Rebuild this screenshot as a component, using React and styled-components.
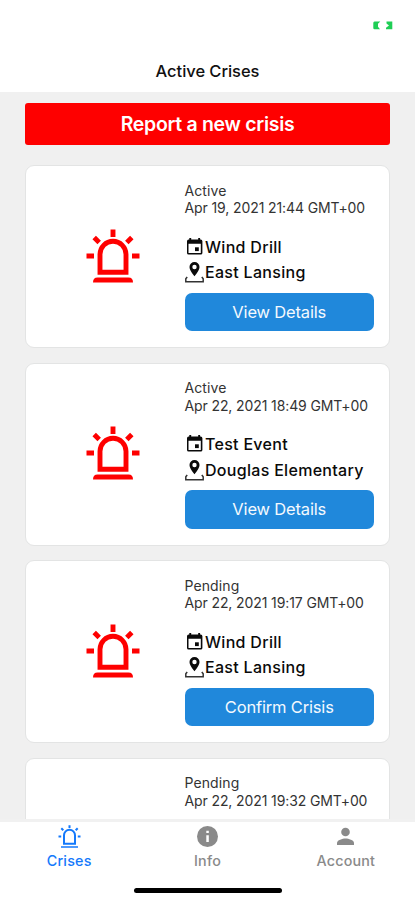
import React from "react";
import styled, { createGlobalStyle } from "styled-components";

const GlobalStyle = createGlobalStyle`
  * { box-sizing: border-box; }
  body { margin: 0; background: #fff; font-family: Inter, "Liberation Sans", sans-serif; }
  button { font-family: inherit; border: 0; padding: 0; margin: 0; }
`;

const Screen = styled.div`
  display: flex;
  flex-direction: column;
  width: 415px;
  height: 900px;
  overflow: hidden;
  background: #fff;
`;

const StatusBar = styled.div`
  display: flex;
  justify-content: flex-end;
  flex: none;
  height: 50px;
  padding: 21px 21px 0 0;
`;

const Header = styled.header`
  display: flex;
  align-items: center;
  justify-content: center;
  flex: none;
  height: 42px;
`;

const HeaderTitle = styled.h1`
  margin: 0;
  font-size: 16.5px;
  line-height: 20px;
  font-weight: 500;
  letter-spacing: -0.05px;
  color: #111;
`;

const Content = styled.main`
  display: flex;
  flex-direction: column;
  flex: none;
  height: 727px;
  padding: 11px 25px 0 25px;
  overflow: hidden;
  background: #f0f0f0;
`;

const ReportButton = styled.button`
  flex: none;
  height: 42px;
  border-radius: 3px;
  background: #fe0000;
  color: #fff;
  font-size: 19.5px;
  line-height: 43px;
  font-weight: 600;
  letter-spacing: -0.3px;
`;

const CardList = styled.div`
  display: flex;
  flex-direction: column;
  gap: 14.5px;
  margin-top: 20px;
`;

const Card = styled.article`
  display: grid;
  grid-template-columns: 158.5px 189.5px;
  flex: none;
  height: 183px;
  border: 1px solid #e3e4e4;
  border-radius: 9px;
  background: #fff;
`;

const CardIcon = styled.div`
  display: flex;
  align-items: center;
  justify-content: center;
  padding: 0 0 2px 15.5px;
`;

const CardBody = styled.div`
  display: flex;
  flex-direction: column;
  padding-top: 15.5px;
`;

const Meta = styled.div`
  height: 17.5px;
  font-size: 14px;
  line-height: 17.5px;
  letter-spacing: ${(p) => p.$tracking || 0}px;
  color: #333;
  white-space: nowrap;
`;

const Facts = styled.div`
  display: flex;
  flex-direction: column;
  margin-top: 17.5px;
`;

const Fact = styled.div`
  display: flex;
  align-items: center;
  height: 25.5px;
  font-size: 16px;
  font-weight: 500;
  letter-spacing: 0.3px;
  color: #0a0a0a;
  white-space: nowrap;
  svg { flex: none; margin-right: 1.5px; }
`;

const ActionButton = styled.button`
  height: 38.5px;
  margin-top: 7.5px;
  border-radius: 7px;
  background: #2088db;
  color: #f4f9fe;
  font-size: 16.5px;
  line-height: 39.5px;
  font-weight: 400;
  letter-spacing: -0.17px;
`;

const TabBarEdge = styled.div`
  flex: none;
  height: 3px;
  background: #f1f1f1;
`;

const TabBar = styled.nav`
  display: grid;
  grid-template-columns: repeat(3, 1fr);
  flex: none;
  height: 54.5px;
`;

const Tab = styled.a`
  display: flex;
  flex-direction: column;
  align-items: center;
  padding-top: 3px;
  color: ${(p) => (p.$active ? "#1479fb" : "#8a8a8a")};
`;

const TabLabel = styled.span`
  margin-top: 4px;
  font-size: 14.3px;
  line-height: 17px;
  font-weight: 500;
  letter-spacing: 0.2px;
`;

const HomeArea = styled.div`
  display: flex;
  justify-content: center;
  padding-top: 11px;
`;

const HomeIndicator = styled.div`
  width: 148px;
  height: 5px;
  border-radius: 3px;
  background: #000;
`;

function BatteryIcon() {
  return (
    <svg width="21" height="9" viewBox="0 0 21 9" fill="#1fce55">
      <path d="M1.500.5h5.800L5 2.800v3l2 2.500H1.500Q.3 8.300.3 7V2Q.3.500 1.500.500Z" />
      <path d="M13.500.5h5.800v7.800h-6.300v-1.500l3-2.300-2.500-2Z" />
    </svg>
  );
}

function SirenIcon() {
  return (
    <svg width="54" height="54" viewBox="0 0 54 54" fill="none" stroke="#fe0000" strokeWidth="4.9">
      <path d="M14 43.300V25.300a13 13 0 0 1 26 0v18Z" />
      <path d="M27 .5V8M.5 27H8M46 27h7.500M8.200 8.500l5 5M45.800 8.500l-5 5" />
      <path fill="#fe0000" stroke="none" d="M7 53.500q0-5 4.500-5h31q4.500 0 4.500 5Z" />
    </svg>
  );
}

function SirenTabIcon() {
  return (
    <svg width="23" height="23" viewBox="0 0 23 23" fill="none" stroke="#1479fb" strokeWidth="2">
      <path d="M6 18.700V10.300a5.500 5.500 0 0 1 11 0v8.400Z" />
      <path d="M11.500.300v2.700M.5 11.500h2.700M19.800 11.500h2.700M3.300 3.300l2 2M19.700 3.300l-2 2" />
      <path strokeWidth="1.5" d="M3 22h17" />
    </svg>
  );
}

function EventIcon() {
  return (
    <svg width="19" height="20" viewBox="0 0 19 20" fill="#0a0a0a">
      <path
        fillRule="evenodd"
        d="M4.300 1h1.900v1.600h7V1h1.900v1.600h.6a1.700 1.700 0 0 1 1.700 1.700v11.600a1.700 1.700 0 0 1-1.700 1.700H3.700A1.700 1.700 0 0 1 2 15.900V4.300a1.700 1.700 0 0 1 1.700-1.700h.6Zm-.8 5.700v9.300h12.300V6.700Z"
      />
      <path d="M10 10.300h3.800v3.800h-3.800Z" />
    </svg>
  );
}

function PlaceIcon() {
  return (
    <svg width="19" height="22" viewBox="0 0 19 22">
      <path
        fill="#0a0a0a"
        fillRule="evenodd"
        d="M9.500 1a5 5 0 0 1 5 5c0 3.500-5 9.300-5 9.300s-5-5.800-5-9.300a5 5 0 0 1 5-5Zm0 2.800a2.200 2.200 0 1 0 0 4.400 2.200 2.200 0 0 0 0-4.400Z"
      />
      <path fill="none" stroke="#333" strokeWidth="1.5" d="M2.200 16l-1.400 1.800v2.900h17.400v-2.900l-1.400-1.800" />
    </svg>
  );
}

function InfoIcon() {
  return (
    <svg width="23" height="23" viewBox="0 0 23 23">
      <circle cx="11.500" cy="11.500" r="10.500" fill="#8a8a8a" />
      <path fill="#fff" d="M10.300 5.800h2.500v2.300h-2.500ZM10.300 10.300h2.500v6.700h-2.500Z" />
    </svg>
  );
}

function PersonIcon() {
  return (
    <svg width="23" height="23" viewBox="0 0 23 23" fill="#8a8a8a">
      <circle cx="11.500" cy="7" r="4.300" />
      <path d="M3 20v-2c0-3 5.500-4.500 8.500-4.500S20 15 20 18v2Z" />
    </svg>
  );
}

const crises = [
  { status: "Active", date: "Apr 19, 2021 21:44 GMT+00", event: "Wind Drill", place: "East Lansing", action: "View Details" },
  { status: "Active", date: "Apr 22, 2021 18:49 GMT+00", event: "Test Event", place: "Douglas Elementary", action: "View Details" },
  { status: "Pending", date: "Apr 22, 2021 19:17 GMT+00", event: "Wind Drill", place: "East Lansing", action: "Confirm Crisis" },
  { status: "Pending", date: "Apr 22, 2021 19:32 GMT+00" },
];

function CrisisCard({ crisis }) {
  return (
    <Card>
      <CardIcon>{crisis.action && <SirenIcon />}</CardIcon>
      <CardBody>
        <Meta $tracking={0.1}>{crisis.status}</Meta>
        <Meta $tracking={-0.11}>{crisis.date}</Meta>
        {crisis.action && (
          <>
            <Facts>
              <Fact><EventIcon />{crisis.event}</Fact>
              <Fact><PlaceIcon />{crisis.place}</Fact>
            </Facts>
            <ActionButton>{crisis.action}</ActionButton>
          </>
        )}
      </CardBody>
    </Card>
  );
}

export default function App() {
  return (
    <Screen>
      <GlobalStyle />
      <StatusBar><BatteryIcon /></StatusBar>
      <Header><HeaderTitle>Active Crises</HeaderTitle></Header>
      <Content>
        <ReportButton>Report a new crisis</ReportButton>
        <CardList>
          {crises.map((c) => <CrisisCard key={c.date} crisis={c} />)}
        </CardList>
      </Content>
      <TabBarEdge />
      <TabBar>
        <Tab $active><SirenTabIcon /><TabLabel>Crises</TabLabel></Tab>
        <Tab><InfoIcon /><TabLabel>Info</TabLabel></Tab>
        <Tab><PersonIcon /><TabLabel>Account</TabLabel></Tab>
      </TabBar>
      <HomeArea><HomeIndicator /></HomeArea>
    </Screen>
  );
}
